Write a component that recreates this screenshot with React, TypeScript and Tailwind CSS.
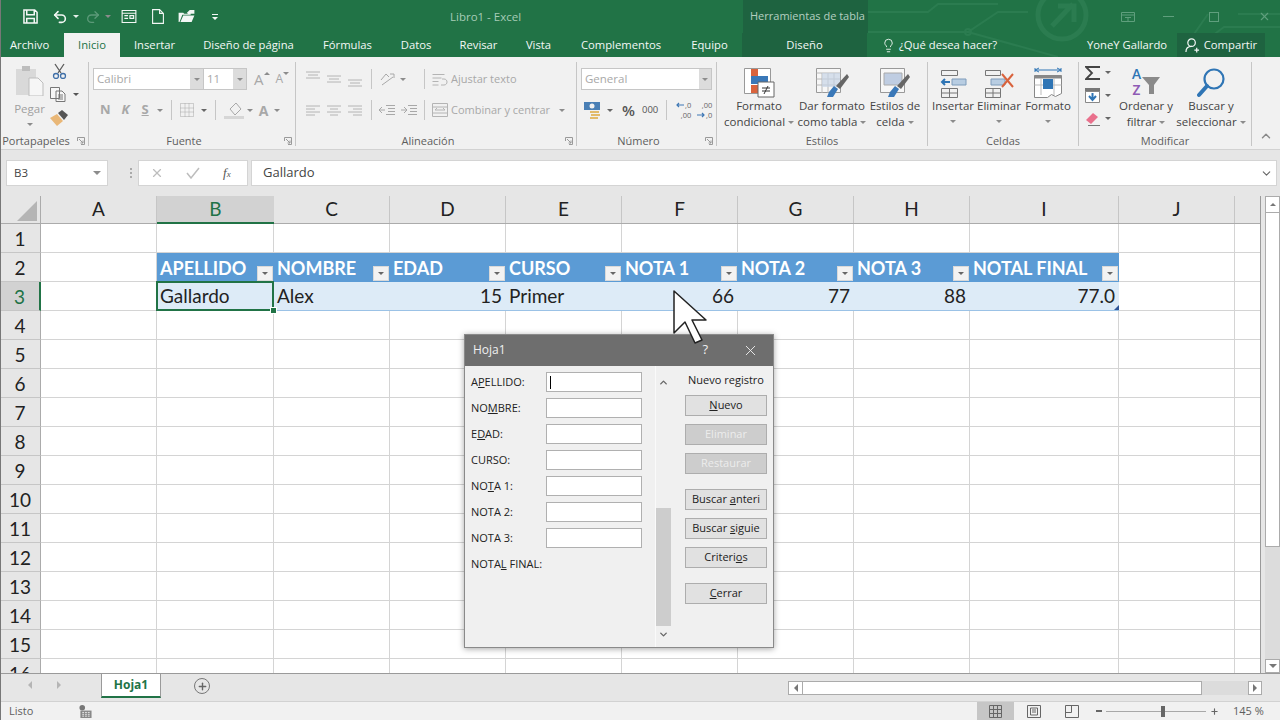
import { ChevronDown, ChevronUp, Lightbulb, Plus, Redo2, Undo2, X } from "lucide-react"
import type { ReactNode } from "react"

const columns = [
    { name: "A", w: "w-[116px]" },
    { name: "B", w: "w-[117px]" },
    { name: "C", w: "w-[116px]" },
    { name: "D", w: "w-[116px]" },
    { name: "E", w: "w-[116px]" },
    { name: "F", w: "w-[116px]" },
    { name: "G", w: "w-[116px]" },
    { name: "H", w: "w-[116px]" },
    { name: "I", w: "w-[149px]" },
    { name: "J", w: "w-[116px]" },
    { name: "", w: "w-[26px]" },
]

const headers = ["", "APELLIDO", "NOMBRE", "EDAD", "CURSO", "NOTA 1", "NOTA 2", "NOTA 3", "NOTAL FINAL", "", ""]
const values = ["", "Gallardo", "Alex", "15", "Primer", "66", "77", "88", "77.0", "", ""]
const rows = Array.from({ length: 16 }, (_, i) => i + 1)

const tabs = [
    { label: "Insertar", w: "w-[68px]" },
    { label: "Diseño de página", w: "w-[120px]" },
    { label: "Fórmulas", w: "w-[78px]" },
    { label: "Datos", w: "w-[59px]" },
    { label: "Revisar", w: "w-[66px]" },
    { label: "Vista", w: "w-[54px]" },
    { label: "Complementos", w: "w-[111px]" },
    { label: "Equipo", w: "w-[66px]" },
]

const fields = [
    ["A", "P", "ELLIDO:"],
    ["NO", "M", "BRE:"],
    ["E", "D", "AD:"],
    ["CURSO:", "", ""],
    ["NO", "T", "A 1:"],
    ["NOTA 2:", "", ""],
    ["NOTA 3:", "", ""],
]

function Caret({ className = "" }: { className?: string }) {
    return <span className={`inline-block h-0 w-0 border-x-[3px] border-t-[3px] border-x-transparent border-t-[#8c8c8c] ${className}`} />
}

function Sep({ className = "" }: { className?: string }) {
    return <div className={`w-px bg-[#c6c6c6] ${className}`} />
}

function Group({ w, label, launcher, children }: { w: string; label: string; launcher?: boolean; children: ReactNode }) {
    return (
        <div className={`${w} flex h-full shrink-0 flex-col`}>
            <div className="flex h-[72px]">{children}</div>
            <div className={`relative text-center text-[11px] leading-[16px] text-[#5e5e5e] ${launcher ? "pr-[16px]" : ""}`}>
                {label}
                {launcher && (
                    <svg viewBox="0 0 8 8" className="absolute right-[3px] top-[4px] h-[8px] w-[8px]" fill="none" stroke="#9a9a9a">
                        <path d="M.5 4V.5H7.5V7.5H4M2 2l4 4M6 3.5V6H3.5" />
                    </svg>
                )}
            </div>
        </div>
    )
}

function Big({ w, icon, lines, caret, dropCaret }: { w: string; icon: ReactNode; lines: string[]; caret?: boolean; dropCaret?: boolean }) {
    return (
        <div className={`${w} flex shrink-0 flex-col items-center text-[11.5px] leading-[16px] text-[#444]`}>
            <div className="flex h-[37px] items-end justify-center">{icon}</div>
            {lines.map((line, i) => (
                <div key={line} className="whitespace-nowrap">
                    {line}
                    {caret && i === lines.length - 1 && <Caret className="mb-[2px] ml-[3px]" />}
                </div>
            ))}
            {dropCaret && <Caret className="mt-[6px]" />}
        </div>
    )
}

function AlignIcon({ kind }: { kind: number }) {
    const d = ["M1 2h14M3 5h10M1 8h14", "M1 6h14M3 9h10M1 12h14", "M1 10h14M3 13h10M1 16h14"][kind]
    return (
        <svg viewBox="0 0 16 18" className="h-[18px] w-[16px]" fill="none" stroke="#b4b4b4">
            <path d={d} />
        </svg>
    )
}

function JustifyIcon({ kind }: { kind: number }) {
    const d = [
        "M1 3h14M1 6h9M1 9h14M1 12h9",
        "M1 3h14M4 6h8M1 9h14M4 12h8",
        "M1 3h14M6 6h9M1 9h14M6 12h9",
    ][kind]
    return (
        <svg viewBox="0 0 16 15" className="h-[15px] w-[16px]" fill="none" stroke="#b4b4b4">
            <path d={d} />
        </svg>
    )
}

function DecimalIcon({ more }: { more?: boolean }) {
    const arrow = (
        <svg viewBox="0 0 8 6" className="h-[6px] w-[8px]" fill="none" stroke="#3f78b5" strokeWidth="1.200">
            {more ? <path d="M0 3h7M5 1l2 2-2 2" /> : <path d="M8 3H1M3 1L1 3l2 2" />}
        </svg>
    )
    return (
        <div className="flex w-[17px] flex-col items-end text-[7.5px] leading-[10px] text-[#666]">
            {more ? (
                <>
                    <span>,00</span>
                    <span className="flex items-center gap-[1px]">
                        {arrow},0
                    </span>
                </>
            ) : (
                <>
                    <span className="flex items-center gap-[1px]">
                        {arrow},0
                    </span>
                    <span>,00</span>
                </>
            )}
        </div>
    )
}

function FilterButton() {
    return (
        <span className="absolute bottom-[1px] right-[1px] flex h-[15px] w-[16px] items-center justify-center bg-[#f2f2f2] shadow-[inset_0_0_0_1px_#d9d9d9]">
            <Caret className="border-t-[#666]" />
        </span>
    )
}

function DialogButton({ before, under, after, disabled, className = "" }: { before?: string; under?: string; after?: string; disabled?: boolean; className?: string }) {
    return (
        <div
            className={`flex h-[21px] w-[82px] items-center justify-center whitespace-pre border border-[#adadad] text-[11px] ${
                disabled ? "bg-[#cdcdcd] text-[#ececec]" : "bg-[#e1e1e1] text-[#222]"
            } ${className}`}
        >
            <span>
                {before}
                {under && <span className="underline">{under}</span>}
                {after}
            </span>
        </div>
    )
}

function TitleBar() {
    return (
        <div className="relative flex h-[33px] items-center text-[#eef5f1]">
            {/* circuit pattern behind the title bar */}
            <svg viewBox="0 0 412 57" className="absolute left-[868px] top-0 h-[57px] w-[412px]" fill="none" stroke="#2b7c50" strokeWidth="2">
                <circle cx="194" cy="15" r="24" strokeWidth="5" />
                <path d="M184 26l21-22M190 6h16v16" strokeWidth="5" />
                <path d="M0 32h100l30-20h30M100 32l90 25M0 12h60l10-8h60M316 57l40-30h56M340 14l-30 43M370 14h42" />
                <circle cx="100" cy="32" r="3" />
            </svg>
            <div className="relative flex w-[450px] items-center pl-[23px]">
                <svg viewBox="0 0 16 16" className="h-[15px] w-[15px]" fill="none" stroke="#f3f7f5" strokeWidth="1.6">
                    <path d="M1 1h11.5L15 3.5V15H1zM4 1v5h8V1M4 15v-5h8v5" />
                </svg>
                <Undo2 size={16} strokeWidth={2.4} className="ml-[14px] text-[#f3f7f5]" />
                <Caret className="ml-[5px] border-t-[#e4efe9]" />
                <Redo2 size={16} strokeWidth={2} className="ml-[6px] text-[#5c9a79]" />
                <Caret className="ml-[4px] border-t-[#5c9a79]" />
                <svg viewBox="0 0 16 14" className="ml-[10px] h-[13px] w-[16px]" fill="none" stroke="#f3f7f5" strokeWidth="1.2">
                    <path d="M.6.6h14.8v12.8H.6zM.6 3.5h14.8M3 6h4M3 9h4M9 6h4v3H9z" />
                </svg>
                <svg viewBox="0 0 12 15" className="ml-[15px] h-[15px] w-[12px]" fill="none" stroke="#f3f7f5" strokeWidth="1.1">
                    <path d="M.6.6h7l3.8 3.8v10H.6zM7.6.6v3.8h3.8" />
                </svg>
                <svg viewBox="0 0 17 14" className="ml-[14px] h-[13px] w-[17px]" fill="#f3f7f5">
                    <path d="M0 13V3h5l1 1h7v1H4L1 13zM2 13l3-7h12l-3 7zM9 3l3-3h5v4h-7z" />
                </svg>
                <svg viewBox="0 0 8 8" className="ml-[16px] h-[8px] w-[8px]" fill="#f3f7f5">
                    <path d="M1 1h6v1H1zM1 4h6L4 7z" />
                </svg>
            </div>
            <div className="relative w-[293px] text-[11.5px] text-[#a6ccb6]">Libro1 - Excel</div>
            <div className="relative flex h-[33px] w-[125px] items-center bg-[#1e6340] pl-[7px] text-[11px] text-[#b5cfc0]">Herramientas de tabla</div>
            <div className="relative ml-[253px] flex items-center text-[#5f9f7d]">
                <svg viewBox="0 0 14 10" className="h-[10px] w-[14px]" fill="none" stroke="currentColor">
                    <path d="M.5.5h13v9H.5zM.5 3h13M4 5.5h6M7 5.5v4" />
                </svg>
                <div className="ml-[28px] h-px w-[11px] bg-current" />
                <div className="ml-[35px] h-[10px] w-[10px] border border-current" />
                <X size={13} className="ml-[39px]" />
            </div>
        </div>
    )
}

function TabRow() {
    return (
        <div className="relative flex h-[24px] items-center text-[11.25px] text-[#f4f8f6]">
            <div className="w-[64px] pl-[10px]">Archivo</div>
            <div className="flex h-full w-[56px] items-center justify-center bg-[#f1f1f1] text-[#217346]">Inicio</div>
            {tabs.map((tab) => (
                <div key={tab.label} className={`${tab.w} whitespace-nowrap pl-[1px] text-center`}>
                    {tab.label}
                </div>
            ))}
            <div className="flex h-full w-[125px] items-center justify-center bg-[#1e6340]">Diseño</div>
            <Lightbulb size={15} strokeWidth={1.5} className="ml-[14px] text-[#eaf3ee]" />
            <div className="ml-[3px] w-[188px] whitespace-nowrap">¿Qué desea hacer?</div>
            <div className="w-[90px] whitespace-nowrap">YoneY Gallardo</div>
            <div className="flex h-full w-[88px] items-center justify-center bg-[#1e6340]">
                <svg viewBox="0 0 16 16" className="mr-[4px] h-[15px] w-[15px]" fill="none" stroke="#f4f8f6" strokeWidth="1.3">
                    <circle cx="7" cy="5" r="4" />
                    <path d="M1 15c0-4 2-6 6-6M10 13h5M12.5 10.5v5" />
                </svg>
                Compartir
            </div>
        </div>
    )
}

function Ribbon() {
    return (
        <div className="flex h-[93px] border-b border-[#d2d2d2] bg-[#f1f1f1] pt-[4px]">
            <Group w="w-[88px]" label="Portapapeles" launcher>
                <div className="ml-[11px] flex w-[37px] flex-col items-center text-[11.5px] leading-[16px] text-[#a0a0a0]">
                    <svg viewBox="0 0 29 31" className="mt-[4px] h-[31px] w-[29px]">
                        <path d="M1 4h20v26H1z" fill="#d9d9d9" />
                        <path d="M7 1h8v5H7z" fill="#bdbdbd" />
                        <path d="M14 13h9l5 5v13H14z" fill="#f6f6f6" stroke="#bdbdbd" />
                    </svg>
                    <div className="mt-[5px]">Pegar</div>
                    <Caret className="mt-[6px]" />
                </div>
                <div className="ml-[2px] flex flex-col pt-[2px]">
                    <svg viewBox="0 0 15 16" className="ml-[2px] h-[16px] w-[15px]" fill="none" stroke="#5b5b5b" strokeWidth="1.3">
                        <path d="M3 1l6 9M12 1L6 10" />
                        <circle cx="4" cy="13" r="2.5" stroke="#3f6fa8" />
                        <circle cx="11" cy="13" r="2.5" stroke="#3f6fa8" />
                    </svg>
                    <div className="mt-[8px] flex items-center">
                        <svg viewBox="0 0 16 15" className="h-[15px] w-[16px]" fill="#f7f7f7" stroke="#777">
                            <path d="M.5.5h9v11h-9zM6 4h6l3 3v7.5H6zM8 8h5M8 10h5M8 12h5" />
                        </svg>
                        <Caret className="ml-[7px] border-t-[#555]" />
                    </div>
                    <svg viewBox="0 0 18 16" className="mt-[8px] h-[16px] w-[18px]">
                        <path d="M0 8l7-4 6 7-6 5z" fill="#e9b777" />
                        <path d="M8 3l4-3 6 5-4 5z" fill="#555" />
                    </svg>
                </div>
            </Group>
            <Sep className="my-[1px] h-[84px]" />
            <Group w="w-[206px]" label="Fuente" launcher>
                <div className="ml-[4px] flex flex-col pt-[7px] text-[#a8a8a8]">
                    <div className="flex h-[22px] items-center">
                        <div className="flex h-full w-[154px] border border-[#c6c6c6] bg-white text-[11.5px] leading-[20px]">
                            <div className="w-[96px] pl-[3px]">Calibri</div>
                            <div className="flex w-[13px] items-center justify-center bg-[#dcdcdc]">
                                <Caret />
                            </div>
                            <div className="w-[30px] border-l border-[#c6c6c6] pl-[3px]">11</div>
                            <div className="flex w-[13px] items-center justify-center bg-[#dcdcdc]">
                                <Caret />
                            </div>
                        </div>
                        <div className="ml-[7px] flex items-start text-[15px] leading-[20px]">
                            A<Caret className="mt-[3px] rotate-180" />
                        </div>
                        <div className="ml-[6px] flex items-start text-[12px] leading-[20px]">
                            A<Caret className="mt-[3px]" />
                        </div>
                    </div>
                    <div className="mt-[10px] flex h-[20px] items-center text-[13px] font-bold">
                        <span className="ml-[7px]">N</span>
                        <span className="ml-[11px] italic">K</span>
                        <span className="ml-[12px] underline">S</span>
                        <Caret className="ml-[8px]" />
                        <Sep className="ml-[8px] h-[20px]" />
                        <svg viewBox="0 0 14 14" className="ml-[8px] h-[14px] w-[14px]" fill="none" stroke="#a8a8a8" strokeDasharray="1 1">
                            <path d="M.5.5h13v13H.5zM.5 5h13M.5 9h13M5 .5v13M9 .5v13" />
                        </svg>
                        <Caret className="ml-[7px] border-t-[#666]" />
                        <Sep className="ml-[8px] h-[20px]" />
                        <svg viewBox="0 0 20 18" className="ml-[8px] h-[18px] w-[20px]">
                            <path d="M6 8l6-6 5 6-6 6z" fill="none" stroke="#a8a8a8" />
                            <path d="M0 15h20v3H0z" fill="#d6d6d6" />
                        </svg>
                        <Caret className="ml-[3px]" />
                        <span className="ml-[6px] text-[14px]">A</span>
                        <Caret className="ml-[6px]" />
                    </div>
                </div>
            </Group>
            <Sep className="my-[1px] h-[84px]" />
            <Group w="w-[280px]" label="Alineación" launcher>
                <div className="ml-[9px] flex flex-col pt-[8px] text-[#a8a8a8]">
                    <div className="flex h-[20px] items-center">
                        <AlignIcon kind={0} />
                        <span className="ml-[5px]">
                            <AlignIcon kind={1} />
                        </span>
                        <span className="ml-[5px]">
                            <AlignIcon kind={2} />
                        </span>
                        <Sep className="ml-[8px] h-[20px]" />
                        <svg viewBox="0 0 16 16" className="ml-[7px] h-[16px] w-[16px]" fill="none" stroke="#a8a8a8">
                            <path d="M2 9l5-6 3 3M3 14l11-8M11 3h4v4" />
                        </svg>
                        <Caret className="ml-[5px]" />
                        <Sep className="ml-[18px] h-[20px]" />
                        <svg viewBox="0 0 16 13" className="ml-[7px] h-[13px] w-[16px]" fill="none" stroke="#b4b4b4">
                            <path d="M.5 1.5h12M.5 5h9M.5 8.5h6M.5 12h6M9 12h3c4 0 4-6 0-6h-2" />
                        </svg>
                        <span className="ml-[3px] whitespace-nowrap text-[11px]">Ajustar texto</span>
                    </div>
                    <div className="mt-[11px] flex h-[20px] items-center">
                        <JustifyIcon kind={0} />
                        <span className="ml-[5px]">
                            <JustifyIcon kind={1} />
                        </span>
                        <span className="ml-[5px]">
                            <JustifyIcon kind={2} />
                        </span>
                        <Sep className="ml-[8px] h-[20px]" />
                        <svg viewBox="0 0 16 12" className="ml-[7px] h-[12px] w-[16px]" fill="none" stroke="#a8a8a8">
                            <path d="M7 1.500h9M9 4.500h7M9 7.500h7M7 10.500h9M6 6H0M3 3L0 6l3 3" />
                        </svg>
                        <svg viewBox="0 0 16 12" className="ml-[6px] h-[12px] w-[16px]" fill="none" stroke="#a8a8a8">
                            <path d="M7 1.500h9M9 4.500h7M9 7.500h7M7 10.500h9M0 6h6M3 3l3 3-3 3" />
                        </svg>
                        <Sep className="ml-[7px] h-[20px]" />
                        <svg viewBox="0 0 16 14" className="ml-[7px] h-[14px] w-[16px]" fill="none" stroke="#b4b4b4">
                            <path d="M.5.5h15v13H.5zM.5 4h15M.5 10h15M3 7h10M3 7l2-2M13 7l-2-2" />
                        </svg>
                        <span className="ml-[3px] whitespace-nowrap text-[11px]">Combinar y centrar</span>
                        <Caret className="ml-[9px]" />
                    </div>
                </div>
            </Group>
            <Sep className="my-[1px] h-[84px]" />
            <Group w="w-[139px]" label="Número" launcher>
                <div className="ml-[4px] flex flex-col pt-[7px] text-[#a8a8a8]">
                    <div className="flex h-[22px] w-[131px] border border-[#c6c6c6] bg-white text-[11.5px] leading-[20px]">
                        <div className="w-[117px] pl-[3px]">General</div>
                        <div className="flex w-[12px] items-center justify-center bg-[#dcdcdc]">
                            <Caret />
                        </div>
                    </div>
                    <div className="mt-[10px] flex h-[20px] items-center text-[#555]">
                        <svg viewBox="0 0 17 18" className="ml-[3px] h-[18px] w-[17px]">
                            <path d="M0 1h16v8H0z" fill="#4a7fb5" />
                            <circle cx="8" cy="5" r="2.500" fill="#f1f1f1" />
                            <path d="M6 10h9v2H6zM7 13h9v2H7zM6 16h8v2H6z" fill="#e2bb6b" />
                        </svg>
                        <Caret className="ml-[6px] border-t-[#666]" />
                        <span className="ml-[9px] text-[15px] font-semibold leading-none">%</span>
                        <span className="ml-[7px] text-[9.5px]">000</span>
                        <Sep className="ml-[8px] h-[20px]" />
                        <div className="ml-[7px]">
                            <DecimalIcon />
                        </div>
                        <div className="ml-[4px]">
                            <DecimalIcon more />
                        </div>
                    </div>
                </div>
            </Group>
            <Sep className="my-[1px] h-[84px]" />
            <Group w="w-[210px]" label="Estilos">
                <Big
                    w="w-[84px]"
                    lines={["Formato", "condicional"]}
                    caret
                    icon={
                        <svg viewBox="0 0 31 30" className="h-[30px] w-[31px]">
                            <path d="M.5.5h26v25H.5z" fill="#fff" stroke="#999" />
                            <path d="M7 1h7v7H7zM7 17h7v8H7z" fill="#d9633d" />
                            <path d="M7 8h17v8H7z" fill="#3a78b8" />
                            <path d="M14 14h16v15H14z" fill="#fff" stroke="#666" />
                            <path d="M18 20h8M18 23h8M24 18l-4 8" stroke="#333" fill="none" />
                        </svg>
                    }
                />
                <Big
                    w="w-[62px]"
                    lines={["Dar formato", "como tabla"]}
                    caret
                    icon={
                        <svg viewBox="0 0 33 30" className="h-[30px] w-[33px]">
                            <path d="M.5.5h24v24H.5z" fill="#f7f7f7" stroke="#999" />
                            <path d="M.5 5h24M6 5v20M12 5v20M18 5v20M.5 11h24M.5 17h24" stroke="#b8b8b8" fill="none" />
                            <path d="M6 5h18v14H6z" fill="#c7d4e6" opacity=".7" />
                            <path d="M13 24l5-6 4 3-5 8H11z" fill="#3a78b8" />
                            <path d="M20 18L31 6l2 3-9 12z" fill="#666" />
                        </svg>
                    }
                />
                <Big
                    w="w-[64px]"
                    lines={["Estilos de", "celda"]}
                    caret
                    icon={
                        <svg viewBox="0 0 30 30" className="h-[30px] w-[30px]">
                            <path d="M.5.500h24v24H.5z" fill="#f7f7f7" stroke="#999" />
                            <path d="M4 5h18v12H4z" fill="#bfcde2" stroke="#aaa" />
                            <path d="M10 24l5-6 4 3-5 8H8z" fill="#3a78b8" />
                            <path d="M17 18L28 6l2 3-9 12z" fill="#666" />
                        </svg>
                    }
                />
            </Group>
            <Sep className="my-[1px] h-[84px]" />
            <Group w="w-[150px]" label="Celdas">
                <Big
                    w="w-[50px]"
                    lines={["Insertar"]}
                    dropCaret
                    icon={
                        <svg viewBox="0 0 27 28" className="h-[28px] w-[27px]">
                            <path d="M1.500.500h16v5h-16zM1.500 18.500h16v9h-16zM1.500 23h16M9.500 18.500v9" fill="none" stroke="#777" />
                            <path d="M12 9h14v6H12z" fill="#b8cde2" stroke="#7e9cbb" />
                            <path d="M10 12H2M5 9l-3 3 3 3" fill="none" stroke="#2f75b5" strokeWidth="2" />
                        </svg>
                    }
                />
                <Big
                    w="w-[42px]"
                    lines={["Eliminar"]}
                    dropCaret
                    icon={
                        <svg viewBox="0 0 30 28" className="h-[28px] w-[30px]">
                            <path d="M1.500.500h15v5h-15zM1.500 18.500h15v9h-15zM1.500 23h15M9 18.500v9" fill="none" stroke="#777" />
                            <path d="M7 9h14v6H7z" fill="#b8cde2" stroke="#7e9cbb" />
                            <path d="M18 4l11 13M29 4L18 17" fill="none" stroke="#d9633d" strokeWidth="2" />
                        </svg>
                    }
                />
                <Big
                    w="w-[56px]"
                    lines={["Formato"]}
                    dropCaret
                    icon={
                        <svg viewBox="0 0 28 31" className="h-[31px] w-[28px]">
                            <path d="M1 3h26M1 1v4M27 1v4M5 1L1 3l4 2M23 1l4 2-4 2" fill="none" stroke="#2f75b5" />
                            <path d="M.5 8.500h27v18l-6 3-4-2-4 3h-13z" fill="#fff" stroke="#888" />
                            <path d="M.5 8.500h27v3H.5z" fill="#888" />
                            <path d="M7 11v17M20 11v17M.5 18h27" stroke="#bbb" fill="none" />
                            <path d="M9 12h10v10H9z" fill="#2f75b5" />
                        </svg>
                    }
                />
            </Group>
            <Sep className="my-[1px] h-[84px]" />
            <Group w="w-[172px]" label="Modificar">
                <div className="ml-[6px] flex w-[35px] shrink-0 flex-col pt-[4px]">
                    <div className="flex h-[15px] items-center">
                        <svg viewBox="0 0 15 14" className="h-[14px] w-[15px]" fill="none" stroke="#444" strokeWidth="1.800">
                            <path d="M15 2V1H1l6 6-6 6h14v-1" />
                        </svg>
                        <Caret className="ml-[5px] border-t-[#666]" />
                    </div>
                    <div className="mt-[8px] flex h-[15px] items-center">
                        <svg viewBox="0 0 15 15" className="h-[15px] w-[15px]">
                            <path d="M0 0h15v4H0z" fill="#777" />
                            <path d="M.5 3.500h14v11H.5z" fill="#fff" stroke="#888" />
                            <path d="M7.500 5v6M4 8l3.500 4L11 8" fill="none" stroke="#2f75b5" strokeWidth="2" />
                        </svg>
                        <Caret className="ml-[5px] border-t-[#666]" />
                    </div>
                    <div className="mt-[8px] flex h-[15px] items-center">
                        <svg viewBox="0 0 15 14" className="h-[14px] w-[15px]">
                            <path d="M1 8l7-7 5 4-7 7z" fill="#e9708c" />
                            <path d="M3 13.500h12" stroke="#777" />
                        </svg>
                        <Caret className="ml-[5px] border-t-[#666]" />
                    </div>
                </div>
                <Big
                    w="w-[52px]"
                    lines={["Ordenar y", "filtrar"]}
                    caret
                    icon={
                        <div className="flex items-end">
                            <div className="flex flex-col items-center font-['Lato',sans-serif] text-[13px] font-bold">
                                <span className="h-[16px] leading-[16px] text-[#2f75b5]">A</span>
                                <span className="h-[16px] leading-[16px] text-[#8e5bb5]">Z</span>
                            </div>
                            <svg viewBox="0 0 18 18" className="mb-[4px] ml-[1px] h-[18px] w-[18px]">
                                <path d="M0 1h18l-6 8v9H7V9z" fill="#8a8a8a" />
                            </svg>
                        </div>
                    }
                />
                <Big
                    w="w-[78px]"
                    lines={["Buscar y", "seleccionar"]}
                    caret
                    icon={
                        <svg viewBox="0 0 28 30" className="h-[30px] w-[28px]" fill="none" stroke="#2f75b5">
                            <circle cx="17" cy="11" r="9.500" strokeWidth="2.200" />
                            <path d="M10 18L2 27" strokeWidth="4" strokeLinecap="round" />
                        </svg>
                    }
                />
            </Group>
            <Sep className="my-[1px] h-[84px]" />
            <div className="flex flex-1 items-end justify-center pb-[6px] text-[#8a8a8a]">
                <ChevronUp size={14} strokeWidth={2.500} />
            </div>
        </div>
    )
}

function FormulaBar() {
    return (
        <div className="flex h-[46px] bg-[#e6e6e6] pl-[6px] pt-[10px]">
            <div className="flex h-[26px] w-[102px] items-center justify-between border border-[#d4d4d4] bg-white pl-[7px] pr-[6px] text-[11.5px] text-[#444]">
                B3
                <Caret className="border-x-[4px] border-t-[4px]" />
            </div>
            <div className="ml-[15px] flex h-[26px] w-[15px] flex-col items-center justify-center gap-[2px]">
                <span className="h-[2px] w-[2px] bg-[#aaa]" />
                <span className="h-[2px] w-[2px] bg-[#aaa]" />
                <span className="h-[2px] w-[2px] bg-[#aaa]" />
            </div>
            <div className="flex h-[26px] w-[110px] items-center border border-[#d4d4d4] bg-white text-[#bdbdbd]">
                <X size={14} className="ml-[11px]" />
                <svg viewBox="0 0 14 12" className="ml-[22px] h-[12px] w-[14px]" fill="none" stroke="currentColor" strokeWidth="1.500">
                    <path d="M1 6l4 5 8-10" />
                </svg>
                <span className="ml-[23px] font-['Liberation_Serif',serif] text-[13px] italic text-[#555]">
                    f<span className="text-[9px]">x</span>
                </span>
            </div>
            <div className="ml-[3px] flex h-[26px] w-[1026px] items-center justify-between border border-[#d4d4d4] bg-white pl-[11px] pr-[3px] text-[13px] text-[#444]">
                Gallardo
                <ChevronDown size={13} className="text-[#666]" />
            </div>
        </div>
    )
}

function Sheet() {
    return (
        <div className="w-[1261px] shrink-0 overflow-hidden border-r border-[#9a9a9a] font-['Lato',sans-serif] text-[19px] text-[#222]">
            <div className="flex h-[28px] border-b border-[#ababab] bg-[#e6e6e6]">
                <div className="relative w-[41px] shrink-0 border-r border-[#ababab]">
                    <span className="absolute bottom-[2px] right-[3px] h-0 w-0 border-b-[20px] border-l-[20px] border-b-[#b5b5b5] border-l-transparent" />
                </div>
                {columns.map((col) =>
                    col.name === "B" ? (
                        <div key={col.name} className={`${col.w} flex h-[28px] shrink-0 items-center justify-center border-b-2 border-[#217346] bg-[#d2d2d2] text-[#217346]`}>
                            {col.name}
                        </div>
                    ) : (
                        <div key={col.name} className={`${col.w} flex shrink-0 items-center justify-center border-r border-[#c6c6c6]`}>
                            {col.name}
                        </div>
                    )
                )}
            </div>
            {rows.map((row) => (
                <div key={row} className="flex h-[29px]">
                    <div className={`flex w-[41px] shrink-0 items-center justify-center border-b border-[#c6c6c6] pt-[2px] ${row === 3 ? "border-r-2 border-r-[#217346] bg-[#d2d2d2] text-[#217346]" : "border-r border-r-[#ababab] bg-[#e6e6e6]"}`}>
                        {row}
                    </div>
                    {columns.map((col, c) => {
                        if (row === 2 && headers[c] !== "") {
                            return (
                                <div key={col.w + c} className={`${col.w} relative flex shrink-0 items-center whitespace-nowrap bg-[#5b9bd5] pl-[3px] pt-[1px] text-[18px] font-bold text-white`}>
                                    {headers[c]}
                                    <FilterButton />
                                </div>
                            )
                        }
                        if (row === 3 && values[c] !== "") {
                            const numeric = /^\d/.test(values[c])
                            if (c === 1) {
                                return (
                                    <div key={col.w + c} className="relative z-10 -ml-[1px] -mt-[1px] flex h-[30px] w-[118px] shrink-0 items-center whitespace-nowrap border-2 border-[#217346] bg-[#ddebf7] pl-[2px]">
                                        {values[c]}
                                        <span className="absolute -bottom-[5px] -right-[5px] h-[7px] w-[7px] border border-white bg-[#217346]" />
                                    </div>
                                )
                            }
                            return (
                                <div key={col.w + c} className={`${col.w} relative flex shrink-0 items-center whitespace-nowrap border-b border-[#9bc2e6] bg-[#ddebf7] ${numeric ? "justify-end pr-[4px]" : "pl-[3px]"}`}>
                                    {values[c]}
                                    {c === 8 && <span className="absolute bottom-0 right-0 h-0 w-0 border-b-[5px] border-l-[5px] border-b-[#2f5597] border-l-transparent" />}
                                </div>
                            )
                        }
                        return <div key={col.w + c} className={`${col.w} shrink-0 border-b border-r border-[#d4d4d4] bg-white`} />
                    })}
                </div>
            ))}
        </div>
    )
}

function VerticalScroll() {
    return (
        <div className="flex flex-1 justify-end bg-[#e6e6e6]">
            <div className="flex w-[15px] flex-col">
                <div className="flex h-[17px] items-center justify-center border border-[#ababab] bg-white">
                    <Caret className="rotate-180 border-t-[#777]" />
                </div>
                <div className="h-[334px] border-x border-b border-[#ababab] bg-white" />
                <div className="flex-1 bg-[#dcdcdc]" />
                <div className="flex h-[14px] items-center justify-center border border-[#ababab] bg-white">
                    <Caret className="border-x-[4px] border-t-[4px] border-t-[#777]" />
                </div>
            </div>
        </div>
    )
}

function SheetTabs() {
    return (
        <div className="flex h-[28px] border-t border-[#9a9a9a] bg-[#e6e6e6]">
            <div className="ml-[28px] flex h-[22px] items-center">
                <span className="h-0 w-0 border-y-[4px] border-r-[4px] border-y-transparent border-r-[#b5b5b5]" />
                <span className="ml-[25px] h-0 w-0 border-y-[4px] border-l-[4px] border-y-transparent border-l-[#b5b5b5]" />
            </div>
            <div className="ml-[40px] flex h-[24px] w-[60px] items-center justify-center border-x border-b-2 border-[#9a9a9a] border-b-[#217346] bg-white text-[12px] font-bold text-[#217346]">
                Hoja1
            </div>
            <div className="ml-[33px] mt-[4px] flex h-[16px] w-[16px] items-center justify-center rounded-full border border-[#777] text-[#666]">
                <Plus size={11} strokeWidth={3} />
            </div>
            <div className="ml-[578px] mt-[7px] flex h-[14px] w-[474px]">
                <div className="flex w-[15px] items-center justify-center border border-[#ababab] bg-white">
                    <span className="h-0 w-0 border-y-[4px] border-r-[4px] border-y-transparent border-r-[#777]" />
                </div>
                <div className="w-[399px] border-y border-r border-[#ababab] bg-white" />
                <div className="w-[46px] bg-[#dcdcdc]" />
                <div className="flex w-[14px] items-center justify-center border border-[#ababab] bg-white">
                    <span className="h-0 w-0 border-y-[4px] border-l-[4px] border-y-transparent border-l-[#777]" />
                </div>
            </div>
        </div>
    )
}

function StatusBar() {
    return (
        <div className="flex h-[19px] items-center border-t border-[#d2d2d2] bg-[#f1f1f1] text-[11px] text-[#5e5e5e]">
            <span className="ml-[9px] w-[70px]">Listo</span>
            <svg viewBox="0 0 13 14" className="h-[13px] w-[13px]">
                <circle cx="3" cy="3" r="3" fill="#777" />
                <path d="M1 6h12v8H1z" fill="#888" />
                <path d="M3 8h9M3 10h9M3 12h9" stroke="#eee" strokeDasharray="2 1" />
            </svg>
            <div className="ml-[885px] flex h-full w-[37px] items-center justify-center bg-[#c6c6c6]">
                <svg viewBox="0 0 13 13" className="h-[13px] w-[13px]" fill="none" stroke="#666">
                    <path d="M.5.5h12v12H.5zM.5 4.500h12M.5 8.500h12M4.500.5v12M8.500.5v12" />
                </svg>
            </div>
            <svg viewBox="0 0 14 13" className="ml-[13px] h-[13px] w-[14px]" fill="none" stroke="#666">
                <path d="M.5.5h13v12H.5zM3.500 3h7v7h-7zM5 5h4M5 7h4" />
            </svg>
            <svg viewBox="0 0 14 13" className="ml-[24px] h-[13px] w-[14px]" fill="none" stroke="#666">
                <path d="M.5.5h13v12H.5zM6.500.5v7h-6" />
            </svg>
            <div className="ml-[17px] h-[2px] w-[6px] bg-[#666]" />
            <div className="relative ml-[4px] h-px w-[100px] bg-[#a8a8a8]">
                <span className="absolute -top-[5px] left-[55px] h-[11px] w-[4px] bg-[#666]" />
            </div>
            <Plus size={9} strokeWidth={3} className="ml-[4px] text-[#666]" />
            <span className="ml-[14px] whitespace-nowrap">145 %</span>
        </div>
    )
}

function RecordDialog() {
    return (
        <div className="absolute left-[464px] top-[334px] h-[314px] w-[310px] border border-[#8a8a8a] bg-[#f0f0f0] text-[11px] text-[#222] shadow-[0_1px_6px_rgba(0,0,0,0.35)]">
            <div className="flex h-[31px] items-center justify-between bg-[#6e6e6e] pl-[8px] pr-[14px] pb-[1px] text-[12px] text-[#f0f0f0]">
                Hoja1
                <div className="flex items-center">
                    <span className="mr-[34px] text-[13px]">?</span>
                    <X size={17} strokeWidth={1.300} />
                </div>
            </div>
            <div className="flex">
                <div className="w-[190px] shrink-0 pl-[6px] pt-[6px]">
                    {fields.map(([before, under, after]) => (
                        <div key={before + after} className="mb-[6px] flex h-[20px] items-center">
                            <div className="w-[75px] whitespace-nowrap">
                                {before}
                                <span className="underline">{under}</span>
                                {after}
                            </div>
                            <div className="flex h-[20px] w-[96px] items-center border border-[#b0b0b0] bg-white pl-[3px]">
                                {before === "A" && <span className="h-[13px] w-px bg-black" />}
                            </div>
                        </div>
                    ))}
                    <div className="flex h-[20px] items-center whitespace-nowrap">
                        NOTA<span className="underline">L</span>&nbsp;FINAL:
                    </div>
                </div>
                <div className="flex h-[281px] w-[16px] shrink-0 flex-col items-center border-l border-[#fafafa] pt-[11px] text-[#666]">
                    <ChevronUp size={11} strokeWidth={3} className="shrink-0" />
                    <div className="mt-[120px] h-[118px] w-[15px] shrink-0 bg-[#cdcdcd]" />
                    <ChevronDown size={11} strokeWidth={3} className="mt-[3px] shrink-0" />
                </div>
                <div className="ml-[14px] flex flex-col pt-[6px]">
                    <div className="flex h-[17px] w-[82px] items-center justify-center whitespace-nowrap">Nuevo registro</div>
                    <DialogButton className="mt-[6px]" under="N" after="uevo" />
                    <DialogButton className="mt-[8px]" before="Eliminar" disabled />
                    <DialogButton className="mt-[8px]" before="Restaurar" disabled />
                    <DialogButton className="mt-[15px]" before="Buscar " under="a" after="nteri" />
                    <DialogButton className="mt-[8px]" before="Buscar " under="s" after="iguie" />
                    <DialogButton className="mt-[8px]" before="Criteri" under="o" after="s" />
                    <DialogButton className="mt-[15px]" under="C" after="errar" />
                </div>
            </div>
        </div>
    )
}

export default function App() {
    return (
        <div className="relative h-[720px] w-[1280px] overflow-hidden bg-[#e6e6e6] font-['Open_Sans',sans-serif]">
            <div className="bg-[#217346]">
                <TitleBar />
                <TabRow />
            </div>
            <Ribbon />
            <FormulaBar />
            <div className="flex h-[477px]">
                <Sheet />
                <VerticalScroll />
            </div>
            <SheetTabs />
            <StatusBar />
            <RecordDialog />
            {/* mouse pointer captured in the recording */}
            <svg viewBox="0 0 36 56" className="absolute left-[672px] top-[289px] h-[56px] w-[36px]">
                <path d="M2 2v42l11-11 10 21 7-3-10-20h14z" fill="#fff" stroke="#222" strokeWidth="1.500" strokeLinejoin="round" />
            </svg>
            <div className="absolute left-0 top-0 h-full w-px bg-[#777]" />
        </div>
    )
}
